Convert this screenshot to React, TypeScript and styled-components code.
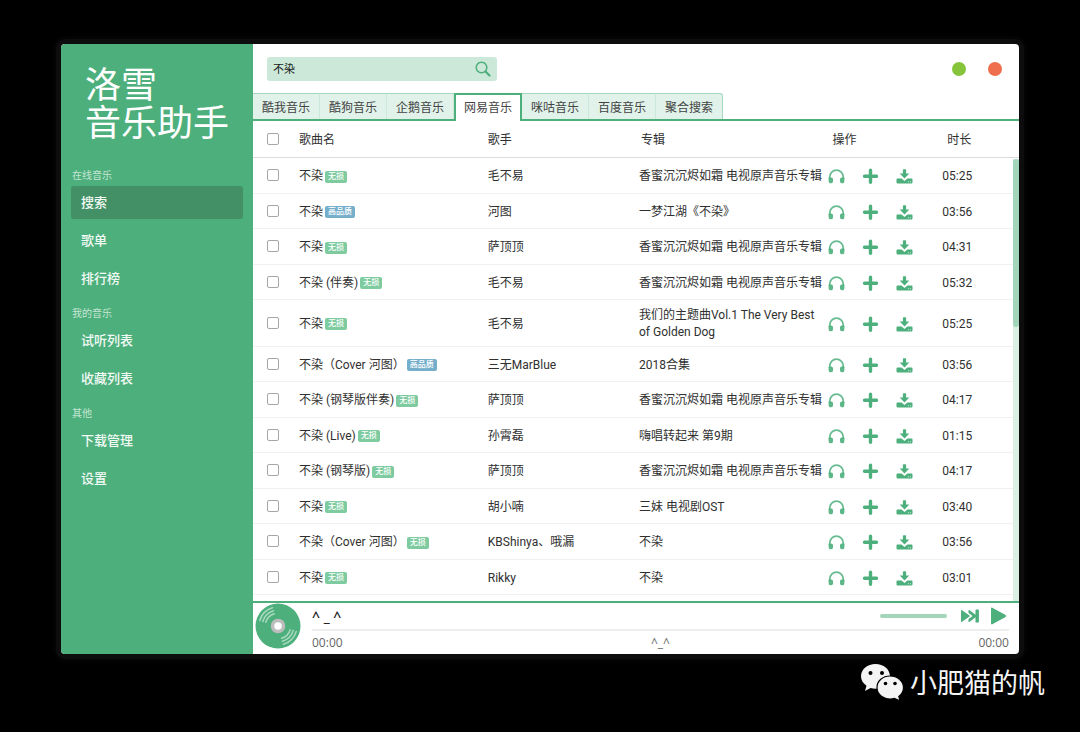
import React from "react";
import styled, { createGlobalStyle, css } from "styled-components";

const green = "#4daf7c";

const Global = createGlobalStyle`
  * { box-sizing: border-box; }
  body {
    margin: 0;
    background: #000;
    color: #303030;
    font: 12px/17px Roboto, "Noto Sans CJK SC", sans-serif;
  }
  button, input { font: inherit; color: inherit; border: 0; padding: 0; margin: 0; background: none; }
  button { cursor: pointer; }
  svg { display: block; }
`;

const Page = styled.div`
  min-height: 100vh;
  padding: 44px 61px 0;
`;

const AppWindow = styled.div`
  display: flex;
  border-radius: 4px;
  overflow: hidden;
  background: #fff;
  box-shadow: 0 0 0 5px #0d0d0d, 0 0 6px 5px #0d0d0d;
`;

const Sidebar = styled.aside`
  flex: 0 0 192px;
  background: ${green};
  color: #fff;
`;

const Logo = styled.h1`
  margin: 0;
  padding: 19px 0 28px 24px;
  font: 400 36px/38px "Noto Sans CJK SC", sans-serif;
`;

const LogoLine = styled.span`
  display: block;
`;

const NavTitle = styled.h2`
  margin: 0;
  padding: 2px 0 3px 11px;
  font-size: 10px;
  line-height: 14px;
  font-weight: 400;
  color: #c5e6d4;
`;

const NavGroup = styled.ul`
  display: flex;
  flex-direction: column;
  gap: 5px;
  list-style: none;
  margin: 0 0 10px;
  padding: 0 10px;
`;

const NavLink = styled.a<{ $active?: boolean }>`
  display: block;
  padding: 0 10px;
  border-radius: 3px;
  font-size: 13px;
  line-height: 33px;
  font-weight: 500;
  color: #f2faf5;
  text-decoration: none;
  background: ${(p) => (p.$active ? "#439066" : "transparent")};
`;

const Main = styled.main`
  flex: 1;
  min-width: 0;
  display: flex;
  flex-direction: column;
`;

const TopBar = styled.header`
  display: flex;
  justify-content: space-between;
  align-items: center;
  height: 49px;
  padding: 0 17px 0 14px;
`;

const SearchForm = styled.form`
  display: flex;
  align-items: center;
  width: 230px;
  height: 24px;
  padding: 0 6px;
  border-radius: 3px;
  background: #cce8d9;
`;

const SearchInput = styled.input`
  flex: 1;
  min-width: 0;
  padding-top: 2px;
  font-size: 11px;
  color: #222;
  outline: none;
`;

const WindowButtons = styled.div`
  display: flex;
  gap: 22px;
`;

const Dot = styled.button<{ $color: string }>`
  width: 14px;
  height: 14px;
  border-radius: 50%;
  background: ${(p) => p.$color};
`;

const Tabs = styled.div`
  display: flex;
  height: 28px;
  border-bottom: 2px solid ${green};
`;

const Tab = styled.button<{ $active?: boolean }>`
  width: 67px;
  height: 26px;
  padding-top: 3px;
  color: #444;
  background: #e0f2e9;
  border-top: 1px solid #a8d8bf;
  border-right: 1px solid #cce8d9;
  &:last-child {
    border-right-color: #a8d8bf;
    border-top-right-radius: 3px;
  }
  ${(p) =>
    p.$active &&
    css`
      width: 68px;
      height: 28px;
      padding-top: 1px;
      background: #fff;
      border: 2px solid ${green};
      border-bottom: 0;
    `}
`;

const ListPane = styled.section`
  position: relative;
  padding-bottom: 6px;
`;

const SongTable = styled.table`
  width: 100%;
  table-layout: fixed;
  border-collapse: separate;
  border-spacing: 0;
`;

const Columns = styled.colgroup`
  col:nth-child(1) { width: 6%; }
  col:nth-child(2) { width: 24%; }
  col:nth-child(3) { width: 20%; }
  col:nth-child(4) { width: 25%; }
  col:nth-child(5) { width: 15%; }
`;

const HeadCell = styled.th<{ $inset?: number }>`
  height: 37px;
  padding: 2px 0 0 ${(p) => p.$inset ?? 0}px;
  border-bottom: 1px solid #dcdcdc;
  text-align: left;
  font-weight: 400;
`;

const Row = styled.tr`
  height: 35px;
  &:nth-child(odd) { height: 36px; }
`;

const Cell = styled.td<{ $inset?: number }>`
  padding: 7px 0 5px ${(p) => p.$inset ?? 0}px;
  border-bottom: 1px solid #eef3f0;
`;

const Check = styled.input`
  appearance: none;
  display: block;
  width: 12px;
  height: 12px;
  margin: -3px 0 0 14px;
  border: 1px solid #a6a6a6;
  border-radius: 2px;
  background: #fff;
`;

const Tag = styled.span<{ $high?: boolean }>`
  display: inline-block;
  margin-left: 2px;
  padding: 0 3px;
  border-radius: 2px;
  font-size: 8px;
  line-height: 12px;
  font-weight: 500;
  vertical-align: middle;
  color: #fff;
  background: ${(p) => (p.$high ? "#75aecb" : "#7ecb9f")};
`;

const Actions = styled.div`
  display: flex;
  gap: 17px;
`;

const IconButton = styled.button`
  width: 17px;
  height: 17px;
  color: ${green};
`;

const ScrollTrack = styled.div`
  position: absolute;
  top: 38px;
  right: 0;
  bottom: 0;
  width: 6px;
  background: #dbf0e5;
`;

const ScrollThumb = styled.div`
  height: 38%;
  border-radius: 3px;
  background: #a3d5bb;
`;

const Player = styled.footer`
  display: flex;
  gap: 11px;
  height: 53px;
  padding: 0 10px 0 2px;
  border-top: 2px solid ${green};
  font-family: "Open Sans", sans-serif;
`;

const PlayerBody = styled.div`
  flex: 1;
`;

const PlayerTop = styled.div`
  display: flex;
  align-items: center;
  gap: 14px;
  height: 28px;
  padding-right: 2px;
  border-bottom: 2px solid #eee;
`;

const PlayerTitle = styled.span`
  flex: 1;
  font-size: 14px;
  font-weight: 600;
  color: #222;
`;

const Volume = styled.div`
  width: 67px;
  height: 4px;
  border-radius: 2px;
  background: #a3d5bb;
`;

const PlayerButtons = styled.div`
  display: flex;
  gap: 11px;
  color: ${green};
`;

const PlayerTimes = styled.div`
  display: flex;
  justify-content: space-between;
  padding-top: 3px;
  color: #666;
`;

const Watermark = styled.div`
  display: flex;
  justify-content: flex-end;
  align-items: center;
  gap: 6px;
  margin-right: -26px;
  padding-top: 7px;
  color: #f4f4f4;
  font-size: 27px;
  line-height: 38px;
`;

const WatermarkName = styled.span`
  padding-top: 4px;
`;

const Headphones = () => (
  <svg width="17" height="17" viewBox="0 0 17 17" aria-hidden="true">
    <path d="M1.800 11V8.800a6.700 6.700 0 0 1 13.400 0V11" fill="none" stroke="currentColor" strokeWidth="1.700" opacity=".85" />
    <path d="M1 9.500h2.200Q5 9.500 5 11.300v2.200q0 1.800-1.800 1.800H2.400Q.9 15.300.7 13.800L.5 10q0-.5.5-.5zM16 9.500h-2.200q-1.800 0-1.800 1.800v2.200q0 1.800 1.800 1.800h.8q1.500 0 1.700-1.500l.2-3.800q0-.5-.5-.5z" fill="currentColor" opacity=".9" />
  </svg>
);

const Plus = () => (
  <svg width="17" height="17" viewBox="0 0 17 17" aria-hidden="true">
    <path d="M8.500 2.300v12M2.500 8.300h12" stroke="currentColor" strokeWidth="3.400" strokeLinecap="round" />
  </svg>
);

const Download = () => (
  <svg width="17" height="17" viewBox="0 0 17 17" fill="currentColor" aria-hidden="true">
    <path d="M6.900 2q0-.8.8-.8h1.600q.8 0 .8.800v3.600h3.200L8.500 10.600 3.700 5.600h3.200z" />
    <path d="M1.300 10.600h4.300l2.900 2.500 2.900-2.500h4.300q.8 0 .8.800v3.200q0 .8-.8.800H1.300q-.8 0-.8-.8v-3.200q0-.8.8-.8z" />
    <circle cx="12.300" cy="13.700" r=".5" fill="#fff" />
    <circle cx="14.300" cy="13.700" r=".5" fill="#fff" />
  </svg>
);

const Disc = () => (
  <svg width="46" height="46" viewBox="0 0 46 46" aria-hidden="true">
    <circle cx="23" cy="23" r="22.500" fill={green} />
    <g fill="none" stroke="#a9d9bf" strokeWidth="1.500" strokeLinecap="round">
      <path d="M4.800 17.500A19 19 0 0 1 17.500 4.800M7.800 18.500A16 16 0 0 1 18.500 7.800M10.800 19.300A12.700 12.700 0 0 1 19.300 10.800" />
      <path d="M41.200 28.500A19 19 0 0 1 28.500 41.200M38.200 27.500A16 16 0 0 1 27.500 38.200M35.200 26.700A12.700 12.700 0 0 1 26.700 35.200" />
    </g>
    <circle cx="23" cy="23" r="5.500" fill="#fff" stroke="#bdbdbd" strokeWidth="3.500" />
  </svg>
);

const WeChat = () => (
  <svg width="44" height="38" viewBox="0 0 44 38" aria-hidden="true">
    <path d="M15.500 1C7.500 1 1 6.300 1 13.300c0 4 2.200 7.200 5.500 9.500L5 28l5.500-2.900c1.700.5 3.300.7 5 .7C23.500 25.800 30 20.300 30 13.300S23.500 1 15.500 1z" fill="#f4f4f4" />
    <path d="M30 13c-7.200 0-13 4.900-13 11.500S22.800 36 30 36c1.500 0 3-.2 4.300-.6L40 37.800l-1.200-4.200c2.800-2.100 4.700-5.300 4.700-9.100C43.500 17.900 37.200 13 30 13z" fill="#f4f4f4" stroke="#000" strokeWidth="1.200" />
    <g fill="#000">
      <circle cx="10.500" cy="10" r="2" /><circle cx="22" cy="10" r="2" />
      <circle cx="25.500" cy="20.500" r="1.800" /><circle cx="35" cy="20.500" r="1.800" />
    </g>
  </svg>
);

const nav = [
  { title: "在线音乐", items: ["搜索", "歌单", "排行榜"] },
  { title: "我的音乐", items: ["试听列表", "收藏列表"] },
  { title: "其他", items: ["下载管理", "设置"] },
];

const sources = ["酷我音乐", "酷狗音乐", "企鹅音乐", "网易音乐", "咪咕音乐", "百度音乐", "聚合搜索"];

const soundtrack = "香蜜沉沉烬如霜 电视原声音乐专辑";

const songs = [
  { name: "不染", tag: "无损", singer: "毛不易", album: soundtrack, time: "05:25" },
  { name: "不染", tag: "高品质", singer: "河图", album: "一梦江湖《不染》", time: "03:56" },
  { name: "不染", tag: "无损", singer: "萨顶顶", album: soundtrack, time: "04:31" },
  { name: "不染 (伴奏)", tag: "无损", singer: "毛不易", album: soundtrack, time: "05:32" },
  { name: "不染", tag: "无损", singer: "毛不易", album: "我们的主题曲Vol.1 The Very Best of Golden Dog", time: "05:25" },
  { name: "不染（Cover 河图）", tag: "高品质", singer: "三无MarBlue", album: "2018合集", time: "03:56" },
  { name: "不染 (钢琴版伴奏)", tag: "无损", singer: "萨顶顶", album: soundtrack, time: "04:17" },
  { name: "不染 (Live)", tag: "无损", singer: "孙霄磊", album: "嗨唱转起来 第9期", time: "01:15" },
  { name: "不染 (钢琴版)", tag: "无损", singer: "萨顶顶", album: soundtrack, time: "04:17" },
  { name: "不染", tag: "无损", singer: "胡小喃", album: "三妹 电视剧OST", time: "03:40" },
  { name: "不染（Cover 河图）", tag: "无损", singer: "KBShinya、哦漏", album: "不染", time: "03:56" },
  { name: "不染", tag: "无损", singer: "Rikky", album: "不染", time: "03:01" },
];

export default function App() {
  return (
    <Page>
      <Global />
      <AppWindow>
        <Sidebar>
          <Logo>
            <LogoLine>洛雪</LogoLine>
            <LogoLine>音乐助手</LogoLine>
          </Logo>
          <nav>
            {nav.map((group) => (
              <React.Fragment key={group.title}>
                <NavTitle>{group.title}</NavTitle>
                <NavGroup>
                  {group.items.map((item) => (
                    <li key={item}>
                      <NavLink href="#" $active={item === "搜索"}>{item}</NavLink>
                    </li>
                  ))}
                </NavGroup>
              </React.Fragment>
            ))}
          </nav>
        </Sidebar>
        <Main>
          <TopBar>
            <SearchForm>
              <SearchInput aria-label="搜索歌曲" defaultValue="不染" />
              <button type="button" aria-label="搜索">
                <svg width="16" height="16" viewBox="0 0 16 16" fill="none" stroke={green} strokeLinecap="round" aria-hidden="true">
                  <circle cx="6.500" cy="6.500" r="5.300" strokeWidth="1.500" />
                  <path d="M10.700 10.700l3.800 3.800" strokeWidth="2.200" />
                </svg>
              </button>
            </SearchForm>
            <WindowButtons>
              <Dot $color="#85c43b" aria-label="最小化" />
              <Dot $color="#ee6e4d" aria-label="关闭" />
            </WindowButtons>
          </TopBar>
          <Tabs role="tablist">
            {sources.map((name) => (
              <Tab key={name} role="tab" aria-selected={name === "网易音乐"} $active={name === "网易音乐"}>{name}</Tab>
            ))}
          </Tabs>
          <ListPane>
            <SongTable>
              <Columns>
                <col /><col /><col /><col /><col /><col />
              </Columns>
              <thead>
                <tr>
                  <HeadCell><Check type="checkbox" aria-label="全选" /></HeadCell>
                  <HeadCell>歌曲名</HeadCell>
                  <HeadCell $inset={5}>歌手</HeadCell>
                  <HeadCell $inset={5}>专辑</HeadCell>
                  <HeadCell $inset={5}>操作</HeadCell>
                  <HeadCell $inset={5}>时长</HeadCell>
                </tr>
              </thead>
              <tbody>
                {songs.map((song, i) => (
                  <Row key={i}>
                    <Cell><Check type="checkbox" aria-label={song.name} /></Cell>
                    <Cell>{song.name}<Tag $high={song.tag === "高品质"}>{song.tag}</Tag></Cell>
                    <Cell $inset={5}>{song.singer}</Cell>
                    <Cell $inset={3}>{song.album}</Cell>
                    <Cell $inset={1}>
                      <Actions>
                        <IconButton aria-label="播放"><Headphones /></IconButton>
                        <IconButton aria-label="添加"><Plus /></IconButton>
                        <IconButton aria-label="下载"><Download /></IconButton>
                      </Actions>
                    </Cell>
                    <Cell>{song.time}</Cell>
                  </Row>
                ))}
              </tbody>
            </SongTable>
            <ScrollTrack><ScrollThumb /></ScrollTrack>
          </ListPane>
          <Player>
            <Disc />
            <PlayerBody>
              <PlayerTop>
                <PlayerTitle>^ _ ^</PlayerTitle>
                <Volume />
                <PlayerButtons>
                  <button aria-label="下一首">
                    <svg width="18" height="18" viewBox="0 0 18 18" fill="currentColor" aria-hidden="true">
                      <path d="M0 3.800q0-1.200 1-.6l7.500 5.200q.8.600 0 1.200L1 14.800q-1 .6-1-.6z" />
                      <path d="M7.500 3.600q0-1 .9-.5l6.100 4.700V3q0-.6.6-.6h2.200q.6 0 .6.600v12q0 .6-.6.600h-2.200q-.6 0-.6-.6v-4.800l-6.100 4.700q-.9.500-.9-.5V12l3.500-2.400q.7-.6 0-1.200L7.500 6z" />
                    </svg>
                  </button>
                  <button aria-label="播放">
                    <svg width="17" height="18" viewBox="0 0 17 18" fill="currentColor" aria-hidden="true">
                      <path d="M1 2q0-2 1.800-1.100l12.700 7q1.500 1.100 0 2.200l-12.700 7Q1 18 1 16z" />
                    </svg>
                  </button>
                </PlayerButtons>
              </PlayerTop>
              <PlayerTimes>
                <span>00:00</span>
                <span>^_^</span>
                <span>00:00</span>
              </PlayerTimes>
            </PlayerBody>
          </Player>
        </Main>
      </AppWindow>
      <Watermark>
        <WeChat />
        <WatermarkName>小肥猫的帆</WatermarkName>
      </Watermark>
    </Page>
  );
}
